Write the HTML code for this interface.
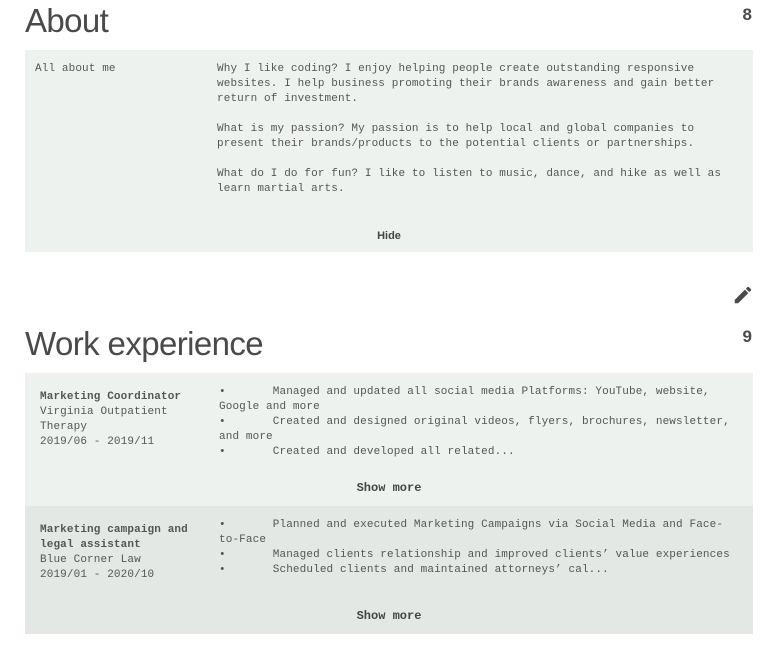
<!DOCTYPE html>
<html><head><style>
body{margin:0;background:#fff;width:777px;height:659px;position:relative;font-family:"Liberation Sans",sans-serif;color:#4a4a4a;overflow:hidden}
.h{position:absolute;left:25px;font-size:33px;letter-spacing:-0.6px;color:#4a4a4a;margin:0;font-weight:normal}
.n{position:absolute;right:25px;font-size:17px;font-weight:bold}
.box{position:absolute;left:25px;width:728px}
.m{font-family:"Liberation Mono",monospace;font-size:11px;line-height:15px;letter-spacing:0.12px;color:#555;position:absolute;white-space:pre}
.btn{position:absolute;left:0;width:728px;text-align:center;font-family:"Liberation Mono",monospace;font-weight:bold;font-size:12px;color:#444}
</style></head><body>
<h1 class="h" style="top:2px">About</h1>
<div class="n" style="top:5px">8</div>
<div class="box" style="top:50px;height:202px;background:#eef2ef">
<div class="m" style="left:10px;top:12px">All about me</div>
<div class="m" style="left:192px;top:12px">Why I like coding? I enjoy helping people create outstanding responsive
websites. I help business promoting their brands awareness and gain better
return of investment.

What is my passion? My passion is to help local and global companies to
present their brands/products to the potential clients or partnerships.

What do I do for fun? I like to listen to music, dance, and hike as well as
learn martial arts.</div>
<div class="btn" style="top:180px;font-family:'Liberation Sans',sans-serif;font-size:11px">Hide</div>
</div>
<svg style="position:absolute;left:732px;top:284px" width="22" height="22" viewBox="0 0 24 24"><path fill="#4a4a4a" d="M3 17.25V21h3.75L17.81 9.94l-3.75-3.75L3 17.25zM20.71 7.04a1 1 0 0 0 0-1.41l-2.34-2.34a1 1 0 0 0-1.41 0l-1.83 1.83 3.75 3.75 1.83-1.83z"/></svg>
<h1 class="h" style="top:325px">Work experience</h1>
<div class="n" style="top:327px">9</div>
<div class="box" style="top:373px;height:133px;background:#eef2ef">
<div class="m" style="left:15px;top:17px"><b>Marketing Coordinator</b>
Virginia Outpatient
Therapy
2019/06 - 2019/11</div>
<div class="m" style="left:194px;top:12px">•       Managed and updated all social media Platforms: YouTube, website,
Google and more
•       Created and designed original videos, flyers, brochures, newsletter,
and more
•       Created and developed all related...</div>
<div class="btn" style="top:108px">Show more</div>
</div>
<div class="box" style="top:506px;height:128px;background:#e3e8e4">
<div class="m" style="left:15px;top:17px"><b>Marketing campaign and
legal assistant</b>
Blue Corner Law
2019/01 - 2020/10</div>
<div class="m" style="left:194px;top:12px">•       Planned and executed Marketing Campaigns via Social Media and Face-
to-Face
•       Managed clients relationship and improved clients’ value experiences
•       Scheduled clients and maintained attorneys’ cal...</div>
<div class="btn" style="top:103px">Show more</div>
</div>
</body></html>
